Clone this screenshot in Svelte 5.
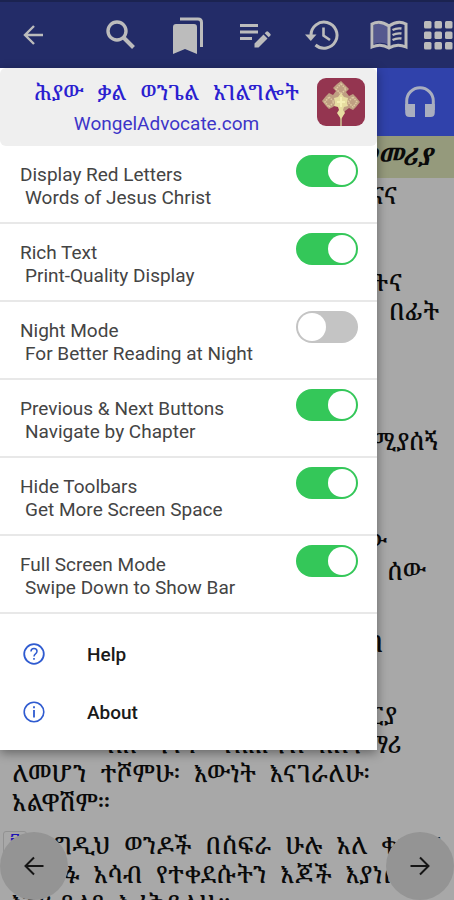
<script>
  let settings = $state([
    { id: 'red', title: 'Display Red Letters', hint: 'Words of Jesus Christ', on: true },
    { id: 'rich', title: 'Rich Text', hint: 'Print-Quality Display', on: true },
    { id: 'night', title: 'Night Mode', hint: 'For Better Reading at Night', on: false },
    { id: 'buttons', title: 'Previous & Next Buttons', hint: 'Navigate by Chapter', on: true },
    { id: 'toolbars', title: 'Hide Toolbars', hint: 'Get More Screen Space', on: true },
    { id: 'full', title: 'Full Screen Mode', hint: 'Swipe Down to Show Bar', on: true }
  ])

  // end: where a line stops, for the lines that run under the drawer
  const verses = [
    [
      { text: 'ልመናና', end: 397 },
      { text: '' },
      { text: '' },
      { text: 'ነገሥታትና', end: 402 },
      { text: 'ሁሉ በፊት', end: 439 }
    ],
    [{ text: '' }, { text: '' }, { text: '' }, { text: 'የሚያሰኝ', end: 439 }],
    [{ text: '' }, { text: '' }, { text: 'ያለው', end: 387 }, { text: 'እርሱም ሰው', end: 426 }],
    [{ text: '' }, { text: 'በ', end: 383 }],
    [
      { text: '' },
      { text: 'ሐዋርያ', end: 397 },
      { text: 'በእውነትም የአሕዛብ አስተማሪ', end: 401 },
      { text: 'ለመሆን ተሾምሁ፡ እውነት እናገራለሁ፡' },
      { text: 'አልዋሽም።' }
    ],
    [
      { text: 'እንግዲህ ወንዶች በስፍራ ሁሉ አለ ቍጣና', number: '፰' },
      { text: 'ክፉ አሳብ የተቀደሱትን እጆች እያነሱ', indent: true },
      { text: 'እንዲጸልዩ እፈቅዳለሁ።' }
    ]
  ]

  const dots = [1, 11.5, 22]
</script>

<div class="page">
  <header class="appbar">
    <button class="back" aria-label="Back">
      <svg width="24" height="24" viewBox="0 0 24 24"><path d="M22 12H4M13 3l-9 9 9 9" fill="none" stroke="#bcbcbc" stroke-width="2.4" /></svg>
    </button>
    <button aria-label="Search">
      <svg width="30" height="30" viewBox="0 0 30 30"><circle cx="11" cy="11" r="9" fill="none" stroke="#bcbcbc" stroke-width="3.4" /><path d="M17 17l10.500 10.500" stroke="#bcbcbc" stroke-width="4" /></svg>
    </button>
    <button aria-label="Bookmarks">
      <svg width="32" height="38" viewBox="0 0 32 38"><path d="M4 8h18q3 0 3 3v27l-12-5-12 5V11q0-3 3-3z" fill="#bcbcbc" /><path d="M8 3h18q3.500 0 3.500 3.500V31" fill="none" stroke="#bcbcbc" stroke-width="3" /></svg>
    </button>
    <button aria-label="Notes">
      <svg width="32" height="28" viewBox="0 0 32 28"><path d="M1 4.500h18M1 11h18M1 17.500h12" stroke="#bcbcbc" stroke-width="3" /><path d="M15.500 26.500v-4l9-9 4 4-9 9zM25.700 12.300l1.500-1.500q1-1 2 0l2 2q1 1 0 2l-1.500 1.500z" fill="#bcbcbc" /></svg>
    </button>
    <button aria-label="History">
      <svg width="34" height="32" viewBox="0 0 34 32"><path d="M6 16a13 13 0 1 1 4.500 10" fill="none" stroke="#bcbcbc" stroke-width="3" /><path d="M0 15.500h11.500L5.800 22z" fill="#bcbcbc" /><path d="M18.500 8.500v8l6.500 4.500" fill="none" stroke="#bcbcbc" stroke-width="2.600" /></svg>
    </button>
    <button aria-label="Read">
      <svg width="38" height="30" viewBox="0 0 38 30"><path d="M4 5q8-4 15 1v19q-7-4-15-1z" fill="#55598f" /><path d="M19 6Q10-.500 2 4v23q9-4 17 1 8-5 17-1V4Q28-.500 19 6zv21" fill="none" stroke="#bcbcbc" stroke-width="3" /><path d="M22.500 10q4-2.200 9-1.500M22.500 15q4-2.200 9-1.500M22.500 20q4-2.200 9-1.500" fill="none" stroke="#bcbcbc" stroke-width="2.400" /></svg>
    </button>
    <button aria-label="Chapters">
      <svg width="30" height="30" viewBox="0 0 30 30">
        {#each dots as y}
          {#each dots as x}
            <rect {x} {y} width="7.500" height="7.500" rx="1.500" fill="#bcbcbc" />
          {/each}
        {/each}
      </svg>
    </button>
  </header>

  <div class="audio">
    <button aria-label="Listen">
      <svg width="32" height="32" viewBox="0 0 32 32"><path d="M2.700 24V15a13.300 13.300 0 0 1 26.600 0v9" fill="none" stroke="#a9aebf" stroke-width="3" /><path d="M1.200 18H11v13H5.500q-4.300 0-4.300-4.500zM30.800 18H21v13h5.500q4.300 0 4.300-4.500z" fill="#a9aebf" /></svg>
    </button>
  </div>

  <h1 class="heading">መመሪያ</h1>

  <main class="reader">
    {#each verses as lines}
      <section class="verse">
        {#each lines as line}
          <p
            class="line"
            class:tail={line.end}
            class:indent={line.indent || line.number}
            style:width={line.end ? line.end - 12 + 'px' : null}
          >
            {#if line.number}<sup class="number">{line.number}</sup>{/if}
            {#each line.text.split(' ') as word}
              <span>{word}</span>
            {/each}
          </p>
        {/each}
      </section>
    {/each}
  </main>

  <button class="nav prev" aria-label="Previous chapter">
    <svg width="20" height="20" viewBox="0 0 20 20"><path d="M19.500 10H2M10 1.500L1.500 10l8.500 8.500" fill="none" stroke="#151515" stroke-width="2" /></svg>
  </button>
  <button class="nav next" aria-label="Next chapter">
    <svg width="20" height="20" viewBox="0 0 20 20"><path d="M.500 10H18M10 1.500l8.500 8.500-8.500 8.500" fill="none" stroke="#151515" stroke-width="2" /></svg>
  </button>

  <aside class="drawer">
    <div class="brand">
      <div class="brand-text">
        <span class="brand-name">
          {#each ['ሕያው', 'ቃል', 'ወንጌል', 'አገልግሎት'] as word}
            <span>{word}</span>
          {/each}
        </span>
        <a href="#site">WongelAdvocate.com</a>
      </div>
      <svg class="logo" width="48" height="48" viewBox="0 0 48 48">
        <rect width="48" height="48" rx="9" fill="#943550" />
        <path d="M24 3l4 4 4 4-3 3 3 4 4-2 3 3 4 5-4 5-3 3-4-2-4 3-2 4-1 3v12h-2V33l-1-3-3-4-3 3-4 2-3-3-4-5 4-5 3-3 4 2 3-4-3-3 4-4z" fill="#bf9f82" />
        <path d="M24 6l5 5-5 5-5-5zM12 19l5 5-5 5-4-5zM36 19l4 5-4 5-5-5z" fill="none" stroke="#dfcba2" stroke-width="1.500" stroke-dasharray="1.500 1" />
        <path d="M24 15l3 4 4 1-1 5 1 3-4 1-1 3 2 3-2 3-2 3-2-3-2-3 2-3-1-3-4-1 1-3-1-5 4-1z" fill="#e6dda0" />
        <path d="M24 19v10M20 24h8" stroke="#f4efb4" stroke-width="2" />
      </svg>
    </div>

    {#each settings as item}
      <label class="setting" for={item.id}>
        <span class="label">
          <span>{item.title}</span>
          <span class="hint">{item.hint}</span>
        </span>
        <input id={item.id} type="checkbox" role="switch" bind:checked={item.on} />
      </label>
    {/each}

    <nav class="links">
      <a href="#help">
        <svg width="22" height="22" viewBox="0 0 22 22" fill="none" stroke="#2f5bd0"><circle cx="11" cy="11" r="9.800" stroke-width="1.800" /><path d="M8 8.500q0-3 3-3t3 2.800q0 1.500-1.500 2.500T11 13.500" stroke-width="1.500" /><path d="M11 15v1.700" stroke-width="1.600" /></svg>
        Help
      </a>
      <a href="#about">
        <svg width="22" height="22" viewBox="0 0 22 22" fill="none" stroke="#2f5bd0"><circle cx="11" cy="11" r="9.800" stroke-width="1.600" /><path d="M11 5.300v1.900M11 9v7.500" stroke-width="1.800" /></svg>
        About
      </a>
    </nav>
  </aside>
</div>

<style>
:global(body) {
  margin: 0;
}

.page {
  position: relative;
  height: 100vh;
  overflow: hidden;
  background: #a8a8a8;
  color: #0a0a0a;
  font-family: Roboto, "Noto Serif Ethiopic", "Noto Sans Ethiopic", sans-serif;
}

button {
  display: flex;
  align-items: center;
  justify-content: center;
  padding: 0;
  border: 0;
  background: none;
}

a {
  text-decoration: none;
}

.appbar {
  display: grid;
  grid-template-columns: 87px repeat(5, 1fr) 31px;
  box-sizing: border-box;
  height: 68px;
  border-top: 2px solid #1b2350;
  background: #232c68;
}

.back {
  padding-right: 21px;
}

.audio {
  display: flex;
  justify-content: flex-end;
  height: 68px;
  padding-right: 18px;
  background: #3042ab;
}

.heading {
  height: 42px;
  margin: 0;
  padding-right: 22px;
  background: #959a7c;
  font-size: 24px;
  line-height: 42px;
  font-style: italic;
  text-align: right;
}

.reader {
  display: flex;
  flex-direction: column;
  gap: 14px;
  padding: 3px 0 0 12px;
}

.line {
  display: flex;
  gap: 14px;
  height: 29px;
  margin: 0;
  font-size: 24px;
  font-weight: 500;
  line-height: 30px;
  white-space: nowrap;
}

.line.tail {
  justify-content: flex-end;
}

.line.indent {
  padding-left: 34px;
}

.number {
  box-sizing: border-box;
  width: 24px;
  height: 24px;
  margin: 0 -11px 0 -43px;
  border: 1px solid #929292;
  border-radius: 3px;
  color: #1c12b4;
  font-size: 16px;
  line-height: 20px;
  text-align: center;
}

.nav {
  position: absolute;
  bottom: 0;
  width: 68px;
  height: 68px;
  border-radius: 50%;
  background: #949494;
}

.prev {
  left: 0;
}

.next {
  right: 0;
}

.drawer {
  position: absolute;
  top: 68px;
  left: 0;
  width: 83%;
  background: #fff;
  box-shadow: 0 3px 10px rgba(0, 0, 0, 0.4);
}

.brand {
  display: flex;
  align-items: flex-start;
  justify-content: space-between;
  box-sizing: border-box;
  height: 78px;
  padding: 10px 12px 0 34px;
  border-radius: 6px;
  background: #efefef;
  color: #2b1fd0;
}

.brand-text {
  display: flex;
  flex-direction: column;
  align-items: center;
}

.brand-name {
  display: flex;
  gap: 14px;
  height: 31px;
  font-size: 21px;
  font-weight: 500;
  line-height: 31px;
  white-space: nowrap;
}

.brand a {
  color: #3d35c8;
  font-size: 19px;
  line-height: 30px;
}

.setting {
  display: flex;
  align-items: flex-start;
  justify-content: space-between;
  box-sizing: border-box;
  height: 78px;
  padding: 9px 19px 0 20px;
  border-bottom: 2px solid #e8e8e8;
}

.label {
  display: flex;
  flex-direction: column;
  padding-top: 8px;
  color: #444;
  font-size: 19px;
  line-height: 23px;
}

.hint {
  padding-left: 5px;
}

.setting input {
  display: flex;
  align-items: center;
  appearance: none;
  box-sizing: border-box;
  width: 62px;
  height: 32px;
  margin: 0;
  padding: 2px;
  border-radius: 16px;
  background: #c4c4c4;
}

.setting input::before {
  content: "";
  width: 28px;
  height: 28px;
  border-radius: 50%;
  background: #fff;
}

.setting input:checked {
  justify-content: flex-end;
  background: #34c759;
}

.links {
  padding: 11px 0 9px;
}

.links a {
  display: flex;
  align-items: center;
  gap: 42px;
  height: 58px;
  padding-left: 23px;
  color: #1a1a1a;
  font-size: 19px;
  font-weight: 500;
}
</style>
